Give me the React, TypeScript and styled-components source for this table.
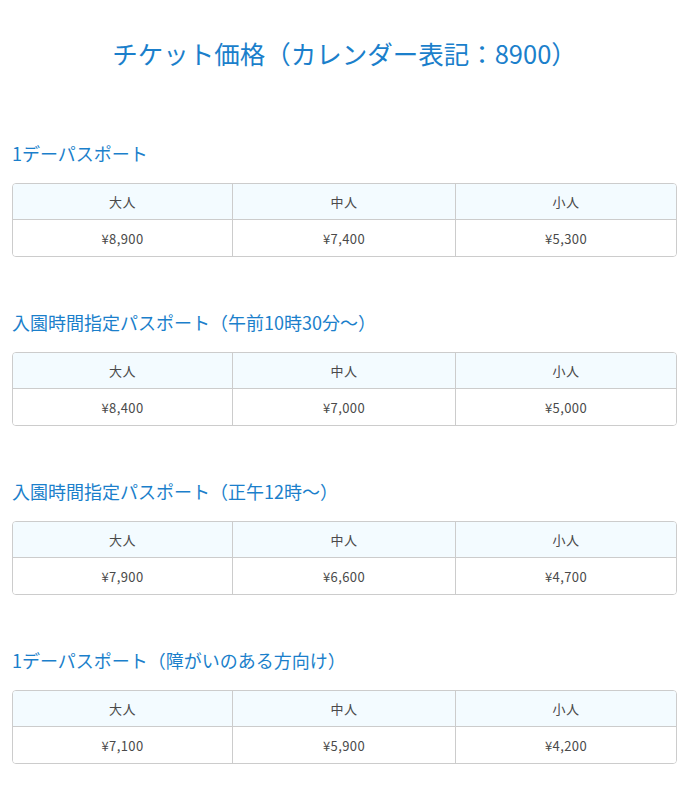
import React from "react";
import styled, { createGlobalStyle } from "styled-components";

const GlobalStyle = createGlobalStyle`
  html, body {
    margin: 0;
    padding: 0;
    background: #ffffff;
    font-family: "Noto Sans CJK JP", "Noto Sans", sans-serif;
  }
`;

const Page = styled.div`
  padding: 34px 12px 24px;
`;

const Title = styled.h1`
  margin: 0 0 67px;
  text-align: center;
  font-size: 25.5px;
  font-weight: 400;
  line-height: 38px;
  color: #1b7fcb;
`;

const Section = styled.section`
  margin-bottom: 51px;
`;

const Heading = styled.h2`
  margin: 0 0 16px;
  font-size: 18px;
  font-weight: 400;
  line-height: 28px;
  color: #1b7fcb;
`;

const Table = styled.div`
  display: grid;
  grid-template-columns: 220px 223px 1fr;
  border: 1px solid #cccccc;
  border-radius: 4px;
  overflow: hidden;
`;

const Cell = styled.div<{ $head?: boolean; $last?: boolean }>`
  height: ${(p) => (p.$head ? "35px" : "36px")};
  display: flex;
  align-items: center;
  justify-content: center;
  font-size: 13px;
  letter-spacing: 0.4px;
  color: #4a4a4a;
  background: ${(p) => (p.$head ? "#f3fbff" : "#ffffff")};
  border-right: ${(p) => (p.$last ? "none" : "1px solid #cccccc")};
  border-bottom: ${(p) => (p.$head ? "1px solid #cccccc" : "none")};
`;

const sections = [
  { title: "1デーパスポート", prices: ["¥8,900", "¥7,400", "¥5,300"] },
  {
    title: "入園時間指定パスポート（午前10時30分～）",
    prices: ["¥8,400", "¥7,000", "¥5,000"],
  },
  {
    title: "入園時間指定パスポート（正午12時～）",
    prices: ["¥7,900", "¥6,600", "¥4,700"],
  },
  {
    title: "1デーパスポート（障がいのある方向け）",
    prices: ["¥7,100", "¥5,900", "¥4,200"],
  },
];

const labels = ["大人", "中人", "小人"];

const App: React.FC = () => {
  return (
    <Page>
      <GlobalStyle />
      <Title>チケット価格（カレンダー表記：8900）</Title>
      {sections.map((s) => (
        <Section key={s.title}>
          <Heading>{s.title}</Heading>
          <Table>
            {labels.map((l, i) => (
              <Cell key={l} $head $last={i === 2}>
                {l}
              </Cell>
            ))}
            {s.prices.map((p, i) => (
              <Cell key={i} $last={i === 2}>
                {p}
              </Cell>
            ))}
          </Table>
        </Section>
      ))}
    </Page>
  );
};

export default App;
